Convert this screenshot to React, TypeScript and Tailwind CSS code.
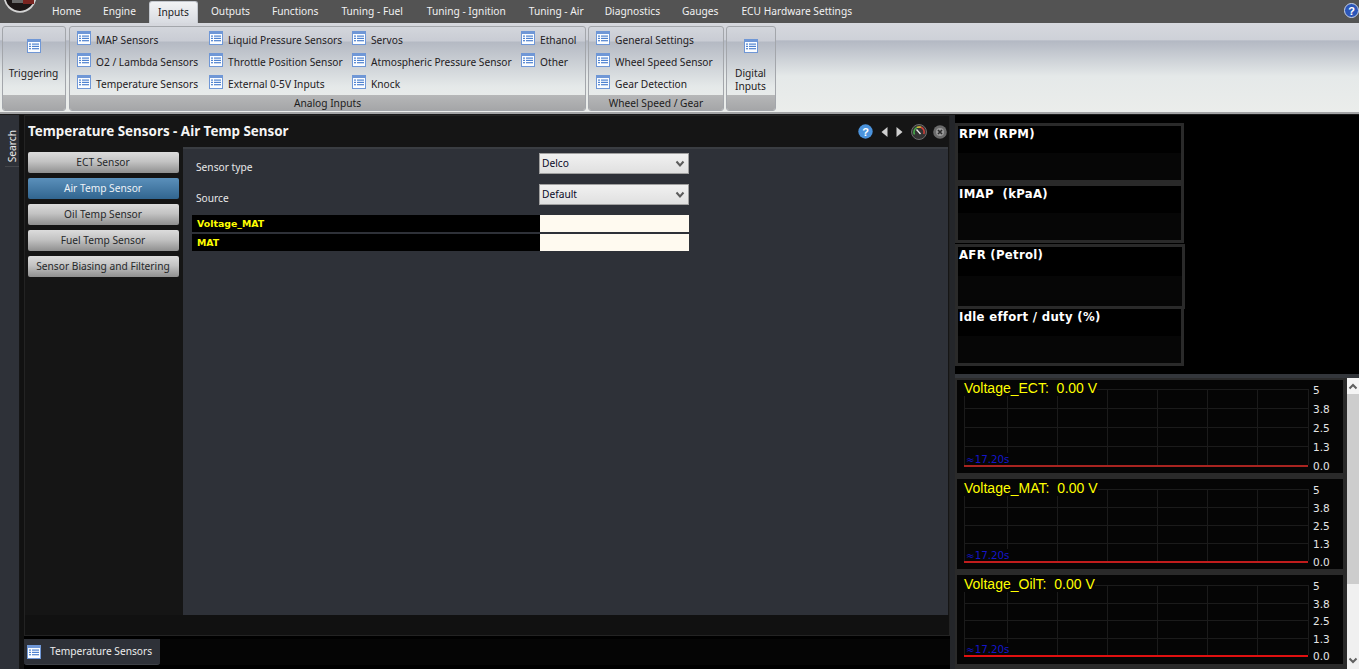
import React from "react";

const UI = "font-['Noto_Sans','Liberation_Sans',sans-serif]";

function ListIcon({ s = 14 }: { s?: number }) {
  return (
    <svg width={s} height={s} viewBox="0 0 14 14" className="shrink-0">
      <rect x="0" y="0" width="14" height="14" fill="#6f97d6" />
      <rect x="1" y="3" width="12" height="10" fill="#fbfdff" />
      <g fill="#4f82cf">
        <rect x="2" y="4.5" width="2" height="1.2" />
        <rect x="2" y="6.8" width="2" height="1.2" />
        <rect x="2" y="9.1" width="2" height="1.2" />
        <rect x="5" y="4.5" width="7" height="1.2" />
        <rect x="5" y="6.8" width="7" height="1.2" />
        <rect x="5" y="9.1" width="7" height="1.2" />
      </g>
    </svg>
  );
}

function Item({ label }: { label: string }) {
  return (
    <div className="flex h-[22px] items-start gap-[5px] text-[10.2px] leading-[20px] text-[#1e2022]">
      <span className="mt-[1px] flex">
        <ListIcon />
      </span>
      <span className="whitespace-nowrap">{label}</span>
    </div>
  );
}

function Group({ label, className, children }: { label?: string; className: string; children: React.ReactNode }) {
  return (
    <div className={`flex h-[85px] shrink-0 flex-col overflow-hidden rounded-[3px] border border-[#a3a6ab] bg-[linear-gradient(180deg,#d3d6dc_0%,#c9ccd4_17%,#b4b9c3_18%,#e5e9e9_72%,#ecedeb_100%)] ${className}`}>
      <div className="min-h-0 flex-1">{children}</div>
      <div className="flex h-[15px] items-center justify-center bg-[linear-gradient(180deg,#b6b7b8,#a5a6a8)] pt-[2px] text-[10.2px] leading-none text-[#1c1c1c]">
        {label}
      </div>
    </div>
  );
}

function BigButton({ label }: { label: React.ReactNode }) {
  return (
    <div className="flex h-full flex-col items-center pr-[1px] pt-[12px]">
      <ListIcon s={14} />
      <div className="mt-[14px] text-center text-[10.2px] leading-[13px] text-[#1e2022]">{label}</div>
    </div>
  );
}

const tabs: [string, string][] = [
  ["Home", "ml-[52px]"],
  ["Engine", "ml-[22px]"],
  ["Inputs", ""],
  ["Outputs", "ml-[13px]"],
  ["Functions", "ml-[22px]"],
  ["Tuning - Fuel", "ml-[23px]"],
  ["Tuning - Ignition", "ml-[24px]"],
  ["Tuning - Air", "ml-[23px]"],
  ["Diagnostics", "ml-[21px]"],
  ["Gauges", "ml-[22px]"],
  ["ECU Hardware Settings", "ml-[23px]"],
];

function TopBar() {
  return (
    <div className="relative flex h-[23px] shrink-0 items-end bg-[#535353]">
      <svg width="40" height="14" viewBox="0 0 40 14" className="absolute left-0 top-0">
        <circle cx="20" cy="-3.7" r="16.4" fill="#d4d4d4" />
        <circle cx="20" cy="-3.7" r="14.6" fill="#1c1616" />
        <rect x="12" y="0" width="11" height="3" fill="#6a6a6a" />
        <rect x="23" y="0" width="11" height="4" fill="#7a2420" />
      </svg>
      {tabs.map(([t, m]) =>
        t === "Inputs" ? (
          <div key={t} className="ml-[13px] flex h-[22px] w-[49px] items-center justify-center rounded-t-[3px] border border-b-0 border-[#c4c8cf] bg-[linear-gradient(180deg,#f2f3f5,#d8dbe1)] text-[10.2px] text-[#202124]">
            {t}
          </div>
        ) : (
          <div key={t} className={`flex h-[22px] items-center whitespace-nowrap text-[10.2px] text-[#f1f1f1] ${m}`}>
            {t}
          </div>
        )
      )}
      <svg width="15" height="15" viewBox="0 0 15 15" className="absolute right-0 top-[3px]">
        <circle cx="7.5" cy="7.5" r="7" fill="#2c56b8" stroke="#c9d4ea" />
        <text x="7.5" y="11.5" fontSize="11" fontWeight="700" fill="#fff" textAnchor="middle" fontFamily="Liberation Sans">?</text>
      </svg>
    </div>
  );
}

function Ribbon() {
  return (
    <div className="flex h-[91px] shrink-0 gap-[2px] border-b-2 border-[#a2a3a5] bg-[linear-gradient(180deg,#d6d8de_0%,#ced1d8_19%,#b3b8c3_20%,#e5e9e9_60%,#ebedeb_100%)] pl-[2px] pt-[3px]">
      <Group label="" className="w-[64px]"><BigButton label="Triggering" /></Group>
      <Group label="Analog Inputs" className="ml-[1px] w-[517px]">
        <div className="flex pl-[7px] pt-[3px]">
          <div className="w-[132px]">
            <Item label="MAP Sensors" /><Item label="O2 / Lambda Sensors" /><Item label="Temperature Sensors" />
          </div>
          <div className="w-[143px]">
            <Item label="Liquid Pressure Sensors" /><Item label="Throttle Position Sensor" /><Item label="External 0-5V Inputs" />
          </div>
          <div className="w-[169px]">
            <Item label="Servos" /><Item label="Atmospheric Pressure Sensor" /><Item label="Knock" />
          </div>
          <div>
            <Item label="Ethanol" /><Item label="Other" />
          </div>
        </div>
      </Group>
      <Group label="Wheel Speed / Gear" className="w-[136px]">
        <div className="pl-[7px] pt-[3px]">
          <Item label="General Settings" /><Item label="Wheel Speed Sensor" /><Item label="Gear Detection" />
        </div>
      </Group>
      <Group label="" className="w-[50px]"><BigButton label={<>Digital<br />Inputs</>} /></Group>
    </div>
  );
}

function SideButton({ label, active }: { label: string; active?: boolean }) {
  return (
    <div
      className={`flex h-[21px] items-center justify-center rounded-[2px] pr-[1px] text-[10.2px] ${
        active
          ? "bg-[linear-gradient(180deg,#5b90bb,#31658f)] text-[#eef3f7]"
          : "bg-[linear-gradient(180deg,#dcdcdc,#c3c3c3_45%,#8f8f8f)] text-[#26282a]"
      }`}
    >
      {label}
    </div>
  );
}

function Select({ value }: { value: string }) {
  return (
    <div className="flex h-[21px] w-[150px] items-center justify-between border border-[#a0a0a0] bg-[linear-gradient(180deg,#f1f1f1,#e0e0e0)] pl-[2px] pr-[3px] text-[10.2px] text-[#0a0a28]">
      <span>{value}</span>
      <svg width="10" height="8" viewBox="0 0 10 8">
        <path d="M1.5 1.5 L5 5.5 L8.5 1.5" fill="none" stroke="#5c5c5c" strokeWidth="2" />
      </svg>
    </div>
  );
}

function DataRow({ label }: { label: string }) {
  return (
    <div className="flex h-[17px] w-[497px] items-stretch">
      <div className="flex w-[348px] items-center bg-black pl-[5px] pt-[1px] font-['DejaVu_Sans',sans-serif] text-[9.4px] font-bold text-[#ffff00]">
        {label}
      </div>
      <div className="flex-1 bg-[#fffaf0]" />
    </div>
  );
}

function MainPanel() {
  return (
    <div className="flex min-h-0 flex-1 flex-col">
      <div className="flex min-h-0 flex-1 flex-col border border-[#232323] bg-[#151515]">
        <div className="flex h-[31px] shrink-0 items-center justify-between pl-[3px] pr-[2px]">
          <span className="text-[13.4px] font-bold text-[#f4f4f4]">Temperature Sensors - Air Temp Sensor</span>
          <div className="flex items-center">
            <svg width="15" height="15" viewBox="0 0 15 15">
              <circle cx="7.5" cy="7.5" r="7.2" fill="#4b93dc" />
              <text x="7.5" y="11.5" fontSize="11" fontWeight="700" fill="#fff" textAnchor="middle" fontFamily="Liberation Sans">?</text>
            </svg>
            <svg width="7" height="10" viewBox="0 0 7 10" className="ml-[8px]"><path d="M6.5 0 L0.5 5 L6.5 10Z" fill="#d0d0d0" /></svg>
            <svg width="7" height="10" viewBox="0 0 7 10" className="ml-[8px]"><path d="M0.5 0 L6.5 5 L0.5 10Z" fill="#d0d0d0" /></svg>
            <svg width="16" height="16" viewBox="0 0 16 16" className="ml-[8px]">
              <circle cx="8" cy="8" r="7.5" fill="#333333" stroke="#6d6d6d" />
              <path d="M3.5 10.5 A5.2 5.2 0 0 1 6 3.4" fill="none" stroke="#46b04a" strokeWidth="1.5" />
              <path d="M6 3.4 A5.2 5.2 0 0 1 10 3.3" fill="none" stroke="#e5c83a" strokeWidth="1.5" />
              <path d="M10 3.3 A5.2 5.2 0 0 1 12.8 10" fill="none" stroke="#d8413a" strokeWidth="1.5" />
              <path d="M9.5 10 L5.5 5.5" stroke="#eeeeee" strokeWidth="1.3" />
            </svg>
            <svg width="14" height="14" viewBox="0 0 14 14" className="ml-[6px]">
              <circle cx="7" cy="7" r="6.8" fill="#6b6b6b" />
              <circle cx="7" cy="7" r="4" fill="#9a9a9a" />
              <path d="M5 5 L9 9 M9 5 L5 9" stroke="#2d2d2d" strokeWidth="1.6" />
            </svg>
          </div>
        </div>
        <div className="flex min-h-0 flex-1 pl-[3px]">
          <div className="flex w-[151px] shrink-0 flex-col gap-[5px] pt-[5px]">
            <SideButton label="ECT Sensor" />
            <SideButton label="Air Temp Sensor" active />
            <SideButton label="Oil Temp Sensor" />
            <SideButton label="Fuel Temp Sensor" />
            <SideButton label="Sensor Biasing and Filtering" />
          </div>
          <div className="ml-[4px] flex-1 border-t-2 border-[#3a3d42] bg-[#2e3138] pl-[9px] pt-[4px]">
            <div className="flex h-[31px] w-[497px] items-start">
              <span className="mt-[7px] w-[347px] pl-[4px] text-[10.2px] text-[#e8e8e8]">Sensor type</span>
              <Select value="Delco" />
            </div>
            <div className="flex h-[31px] w-[497px] items-start">
              <span className="mt-[7px] w-[347px] pl-[4px] text-[10.2px] text-[#e8e8e8]">Source</span>
              <Select value="Default" />
            </div>
            <div className="flex flex-col gap-[2px]">
              <DataRow label="Voltage_MAT" />
              <DataRow label="MAT" />
            </div>
          </div>
          <div className="w-[1px] shrink-0" />
        </div>
        <div className="h-[20px] shrink-0 bg-[#111111]" />
      </div>
      <div className="h-[3px] shrink-0 bg-black" />
      <div className="flex h-[26px] shrink-0 items-stretch bg-[#050505]">
        <div className="flex w-[136px] items-center gap-[9px] rounded-b-[3px] border-b border-[#3d4046] bg-[#2e3138] pl-[3px] text-[10.2px] text-[#ececec]">
          <ListIcon s={14} />
          <span>Temperature Sensors</span>
        </div>
      </div>
      <div className="h-[4px] shrink-0 bg-black" />
    </div>
  );
}

function Gauge({ label, className }: { label: string; className: string }) {
  return (
    <div className={`${className} shrink-0 border-[#2a2a2a] bg-[linear-gradient(180deg,#000_0,#000_50%,#060606_50%,#060606_100%)] pl-[1px] font-['DejaVu_Sans',sans-serif] text-[11.7px] font-bold leading-[14px] tracking-[0.3px] whitespace-pre text-white`}>
      {label}
    </div>
  );
}

function Chart({ title, h, top, bottom, red, titleTop }: { title: string; h: string; top: number; bottom: number; red: string; titleTop: string }) {
  const gh = bottom - top;
  const xs = [43, 93, 143, 193, 243, 293];
  return (
    <div className={`relative ${h} shrink-0 bg-[#050505]`}>
      <svg width="346" height={gh + 2} viewBox={`0 0 346 ${gh + 2}`} className="absolute left-[7px]" style={{ top }}>
        {[0, 1, 2, 3].map((i) => (
          <line key={i} x1="0" x2="344" y1={0.5 + Math.round((gh * i) / 4)} y2={0.5 + Math.round((gh * i) / 4)} stroke="#1b1b1b" />
        ))}
        {xs.map((x) => (
          <line key={x} x1={x + 0.5} x2={x + 0.5} y1="0" y2={gh} stroke="#1b1b1b" />
        ))}
        <line x1="0.5" x2="0.5" y1="0" y2={gh} stroke="#1b1b1b" />
        <line x1="344.5" x2="344.5" y1="0" y2={gh} stroke="#1b1b1b" />
        <line x1="0" x2="344" y1={gh + 1} y2={gh + 1} stroke={red} strokeWidth="2" />
      </svg>
      <span className={`absolute left-[7px] ${titleTop} bg-[#050505] font-['Liberation_Sans',sans-serif] text-[14px] leading-[15px] whitespace-pre text-[#ffff00]`}>{title}</span>
      <span className="absolute left-[9px] bg-[#050505] font-['DejaVu_Sans',sans-serif] text-[10.3px] leading-[12px] whitespace-nowrap text-[#1515c8]" style={{ top: bottom - 12 }}>≈17.20s</span>
      {["5", "3.8", "2.5", "1.3", "0.0"].map((v, i) => (
        <span key={v} className="absolute left-[356px] font-['DejaVu_Sans',sans-serif] text-[10.5px] leading-[12px] text-[#e6e6e6]" style={{ top: top + (gh * i) / 4 - 5 }}>{v}</span>
      ))}
    </div>
  );
}

function RightPanel() {
  return (
    <div className="flex w-[404px] shrink-0 flex-col bg-black">
      <div className="flex h-[259px] shrink-0 flex-col pt-[8px]">
        <Gauge label="RPM (RPM)" className="h-[60px] w-[229px] border-[3px] pt-[1px]" />
        <Gauge label="IMAP  (kPaA)" className="h-[60px] w-[229px] border-[3px] pt-[1px]" />
        <Gauge label="AFR (Petrol)" className="mt-[1px] h-[65px] w-[230px] border-[3px] pt-[1px]" />
        <Gauge label="Idle effort / duty (%)" className="h-[57px] w-[229px] border-[3px] border-t-0 pt-[1px]" />
      </div>
      <div className="flex min-h-0 flex-1 flex-col border-t-4 border-[#33363b]">
        <div className="flex min-h-0 flex-1">
          <div className="flex w-[392px] shrink-0 flex-col gap-[6px] bg-[#2a2a2a] pl-[2px] pr-[4px] pt-[2px]">
            <Chart title="Voltage_ECT:  0.00 V" h="h-[93px]" top={9} bottom={85} red="#a82420" titleTop="top-[1px]" />
            <Chart title="Voltage_MAT:  0.00 V" h="h-[90px]" top={10} bottom={82} red="#c01c1c" titleTop="top-[2px]" />
            <Chart title="Voltage_OilT:  0.00 V" h="h-[89px]" top={10} bottom={80} red="#e01010" titleTop="top-[2px]" />
          </div>
          <div className="flex flex-1 flex-col bg-[#f0f0f0]">
            <div className="flex h-[16px] items-center justify-center bg-[#f4f4f4]">
              <svg width="10" height="7" viewBox="0 0 10 7"><path d="M1.5 5.5 L5 2 L8.5 5.5" fill="none" stroke="#606060" strokeWidth="2" /></svg>
            </div>
            <div className="h-[190px] bg-[#cdcdcd]" />
            <div className="flex-1" />
            <div className="flex h-[17px] items-center justify-center">
              <svg width="10" height="7" viewBox="0 0 10 7"><path d="M1.5 1.5 L5 5 L8.5 1.5" fill="none" stroke="#606060" strokeWidth="2" /></svg>
            </div>
          </div>
        </div>
      </div>
    </div>
  );
}

export default function App() {
  return (
    <div className={`flex h-[669px] w-[1359px] flex-col overflow-hidden bg-black ${UI}`}>
      <TopBar />
      <Ribbon />
      <div className="flex min-h-0 flex-1 border-t border-[#1a1a1a]">
        <div className="flex w-[20px] shrink-0 justify-center border-r border-[#151515] bg-[#2e3138] pl-[4px]">
          <div className="mt-[15px] flex h-fit flex-col items-center">
            <span className="rotate-180 text-[10.2px] leading-[12px] text-[#e8e8e8] [writing-mode:vertical-rl]">Search</span>
            <div className="mt-[4px] h-[1px] w-[14px] bg-[#44474c]" />
          </div>
        </div>
        <div className="w-[4px] shrink-0 bg-[#111]" />
        <MainPanel />
        <div className="w-[5px] shrink-0 bg-[#24262a]" />
        <RightPanel />
      </div>
    </div>
  );
}
